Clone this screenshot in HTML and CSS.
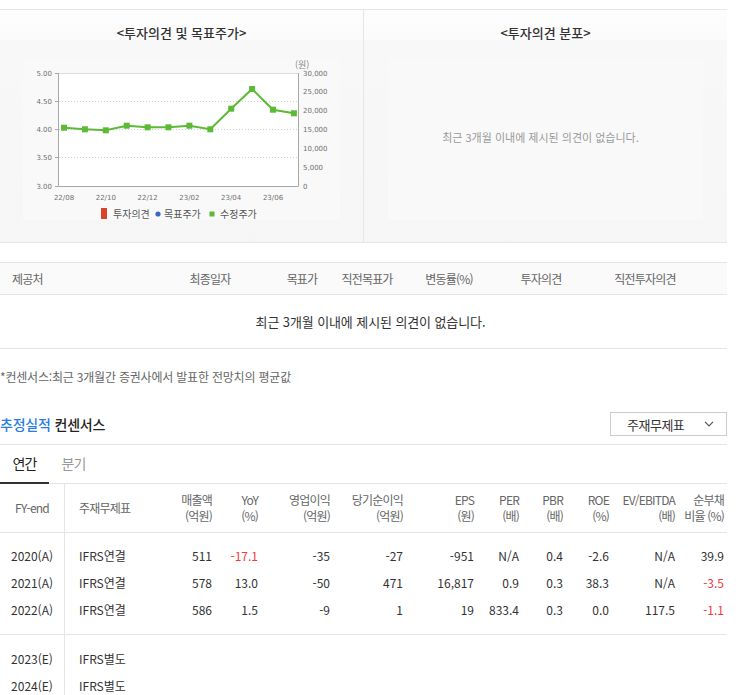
FILE: index.html
```html
<!DOCTYPE html>
<html lang="ko">
<head>
<meta charset="utf-8">
<title>컨센서스</title>
<link rel="stylesheet" href="styles.css">
</head>
<body>
<div class="page">
  <section class="opinion">
    <div class="panel panel-left">
      <h3 class="panel-title">&lt;투자의견 및 목표주가&gt;</h3>
      <svg class="chart" width="320" height="170" viewBox="-2 0 320 170">
        <rect x="-2" y="3" width="317" height="162" fill="#f9f9f9"/>
        <rect x="33" y="18" width="241" height="113" fill="#ffffff"/>
        <g stroke="#cfcfcf" stroke-width="1" stroke-dasharray="1 2">
          <line x1="34" y1="46.5" x2="273" y2="46.5"/>
          <line x1="34" y1="74.5" x2="273" y2="74.5"/>
          <line x1="34" y1="102.5" x2="273" y2="102.5"/>
        </g>
        <line x1="33" y1="18.5" x2="274" y2="18.5" stroke="#dddddd"/>
        <path d="M33.5 18 V131.5 H273.5 V18" fill="none" stroke="#a8a8a8"/>
        <g stroke="#a8a8a8">
          <line x1="30" y1="18.5" x2="33" y2="18.5"/>
          <line x1="30" y1="46.5" x2="33" y2="46.5"/>
          <line x1="30" y1="74.5" x2="33" y2="74.5"/>
          <line x1="30" y1="102.5" x2="33" y2="102.5"/>
          <line x1="30" y1="131.5" x2="33" y2="131.5"/>
        </g>
        <g class="ax" text-anchor="end">
          <text x="27" y="20.5">5.00</text>
          <text x="27" y="49">4.50</text>
          <text x="27" y="77">4.00</text>
          <text x="27" y="105">3.50</text>
          <text x="27" y="133.5">3.00</text>
        </g>
        <g class="ax">
          <text x="278" y="20.5">30,000</text>
          <text x="278" y="39.3">25,000</text>
          <text x="278" y="58.2">20,000</text>
          <text x="278" y="77">15,000</text>
          <text x="278" y="95.8">10,000</text>
          <text x="278" y="114.7">5,000</text>
          <text x="278" y="133.5">0</text>
        </g>
        <text class="unit" x="270" y="13">(원)</text>
        <g class="ax" text-anchor="middle">
          <text x="39" y="144.5">22/08</text>
          <text x="80.8" y="144.5">22/10</text>
          <text x="122.6" y="144.5">22/12</text>
          <text x="164.4" y="144.5">23/02</text>
          <text x="206.2" y="144.5">23/04</text>
          <text x="248" y="144.5">23/06</text>
        </g>
        <polyline fill="none" stroke="#5cba35" stroke-width="2" points="39,72.7 59.9,74.3 80.8,75.3 101.7,70.7 122.6,72.3 143.5,72.3 164.4,70.7 185.3,74.3 206.2,53.7 227.1,34 248,54.7 268.9,58.3"/>
        <g fill="#5cba35">
          <rect x="36" y="69.7" width="6" height="6"/>
          <rect x="56.9" y="71.3" width="6" height="6"/>
          <rect x="77.8" y="72.3" width="6" height="6"/>
          <rect x="98.7" y="67.7" width="6" height="6"/>
          <rect x="119.6" y="69.3" width="6" height="6"/>
          <rect x="140.5" y="69.3" width="6" height="6"/>
          <rect x="161.4" y="67.7" width="6" height="6"/>
          <rect x="182.3" y="71.3" width="6" height="6"/>
          <rect x="203.2" y="50.7" width="6" height="6"/>
          <rect x="224.1" y="31" width="6" height="6"/>
          <rect x="245" y="51.7" width="6" height="6"/>
          <rect x="265.9" y="55.3" width="6" height="6"/>
        </g>
        <rect x="76" y="153" width="6" height="11" fill="#d9412b"/>
        <circle cx="133" cy="159" r="2.6" fill="#3a68c0"/>
        <rect x="184.5" y="156.5" width="5" height="5" fill="#5cba35"/>
        <g class="legend">
          <text x="88" y="163">투자의견</text>
          <text x="139" y="163">목표주가</text>
          <text x="195" y="163">수정주가</text>
        </g>
      </svg>
    </div>
    <div class="panel panel-right">
      <h3 class="panel-title">&lt;투자의견 분포&gt;</h3>
      <div class="empty-box">최근 3개월 이내에 제시된 의견이 없습니다.</div>
    </div>
  </section>

  <section class="report">
    <div class="report-head">
      <span>제공처</span>
      <span>최종일자</span>
      <span>목표가</span>
      <span>직전목표가</span>
      <span>변동률(%)</span>
      <span>투자의견</span>
      <span>직전투자의견</span>
    </div>
    <div class="report-empty">최근 3개월 이내에 제시된 의견이 없습니다.</div>
  </section>

  <p class="note">*컨센서스:최근 3개월간 증권사에서 발표한 전망치의 평균값</p>

  <div class="cons-head">
    <h2 class="cons-title"><span class="blue">추정실적</span> 컨센서스</h2>
    <div class="select">
      <span>주재무제표</span>
      <svg class="chev" width="10" height="6" viewBox="0 0 10 6"><path d="M1 0.8 L5 4.8 L9 0.8" fill="none" stroke="#555" stroke-width="1.2"/></svg>
    </div>
  </div>

  <div class="tabs">
    <span class="tab active">연간</span>
    <span class="tab">분기</span>
  </div>

  <table class="fin">
    <colgroup>
      <col style="width:65px"><col style="width:85px"><col style="width:62px"><col style="width:46px">
      <col style="width:72px"><col style="width:73px"><col style="width:71px"><col style="width:45px">
      <col style="width:44px"><col style="width:46px"><col style="width:66px"><col style="width:52px">
    </colgroup>
    <thead>
      <tr>
        <th class="fy">FY-end</th>
        <th class="std">주재무제표</th>
        <th>매출액<br>(억원)</th>
        <th>YoY<br>(%)</th>
        <th>영업이익<br>(억원)</th>
        <th>당기순이익<br>(억원)</th>
        <th>EPS<br>(원)</th>
        <th>PER<br>(배)</th>
        <th>PBR<br>(배)</th>
        <th>ROE<br>(%)</th>
        <th>EV/EBITDA<br>(배)</th>
        <th class="last">순부채<br>비율 (%)</th>
      </tr>
    </thead>
    <tbody class="grp">
      <tr>
        <td class="fy">2020(A)</td><td class="std">IFRS연결</td><td>511</td><td class="neg">-17.1</td><td>-35</td><td>-27</td><td>-951</td><td>N/A</td><td>0.4</td><td>-2.6</td><td>N/A</td><td class="last">39.9</td>
      </tr>
      <tr>
        <td class="fy">2021(A)</td><td class="std">IFRS연결</td><td>578</td><td>13.0</td><td>-50</td><td>471</td><td>16,817</td><td>0.9</td><td>0.3</td><td>38.3</td><td>N/A</td><td class="last neg">-3.5</td>
      </tr>
      <tr>
        <td class="fy">2022(A)</td><td class="std">IFRS연결</td><td>586</td><td>1.5</td><td>-9</td><td>1</td><td>19</td><td>833.4</td><td>0.3</td><td>0.0</td><td>117.5</td><td class="last neg">-1.1</td>
      </tr>
    </tbody>
    <tbody class="grp">
      <tr>
        <td class="fy">2023(E)</td><td class="std">IFRS별도</td><td></td><td></td><td></td><td></td><td></td><td></td><td></td><td></td><td></td><td class="last"></td>
      </tr>
      <tr>
        <td class="fy">2024(E)</td><td class="std">IFRS별도</td><td></td><td></td><td></td><td></td><td></td><td></td><td></td><td></td><td></td><td class="last"></td>
      </tr>
    </tbody>
  </table>
</div>
</body>
</html>
```

FILE: styles.css
```css
* {
  box-sizing: border-box;
}

body {
  margin: 0;
  background: #ffffff;
  font-family: "Noto Sans CJK KR", "Noto Sans", sans-serif;
  font-size: 12px;
  color: #333333;
}

.page {
  width: 727px;
}

/* ---------- opinion panels ---------- */
.opinion {
  margin-top: 9px;
  display: grid;
  grid-template-columns: 364px 363px;
  height: 234px;
  border-top: 1px solid #e6e6e6;
  border-bottom: 1px solid #e6e6e6;
}

.panel {
  background: linear-gradient(to bottom, #fdfdfd 0, #fbfbfb 30px, #f8f8f8 31px, #f6f6f6 100%);
}

.panel-left {
  border-right: 1px solid #e6e6e6;
}

.panel-title {
  margin: 0;
  padding-top: 13px;
  line-height: 20px;
  font-size: 13px;
  font-weight: 500;
  text-align: center;
  color: #333333;
}

.chart {
  display: block;
  margin: 12px 0 0 23px;
}

.ax {
  font-family: "DejaVu Sans", sans-serif;
  font-size: 7px;
  fill: #707070;
}

.unit {
  font-family: "Noto Sans CJK KR", sans-serif;
  font-size: 9px;
  fill: #888888;
}

.legend {
  font-family: "Noto Sans CJK KR", sans-serif;
  font-size: 10px;
  fill: #555555;
}

.empty-box {
  margin: 15px 0 0 24px;
  width: 315px;
  height: 162px;
  padding: 0 10px 4px 0;
  background: #f9f9f9;
  display: flex;
  align-items: center;
  justify-content: center;
  font-size: 11px;
  color: #999999;
}

/* ---------- report table ---------- */
.report {
  margin-top: 19px;
}

.report-head {
  display: grid;
  grid-template-columns: 160px 100px 84px 46px 118px 66px 142px;
  align-items: center;
  height: 33px;
  border-top: 1px solid #e5e5e5;
  border-bottom: 1px solid #e5e5e5;
  background: #fafafa;
  color: #666666;
  letter-spacing: -0.8px;
}

.report-head span {
  display: flex;
  justify-content: center;
  white-space: nowrap;
}

.report-head span:first-child {
  justify-content: flex-start;
  padding-left: 12px;
}

.report-empty {
  height: 54px;
  padding-left: 14px;
  border-bottom: 1px solid #e5e5e5;
  display: flex;
  align-items: center;
  justify-content: center;
  font-size: 13px;
  letter-spacing: -0.1px;
  color: #333333;
}

.note {
  margin: 19px 0 0;
  line-height: 18px;
  color: #666666;
  letter-spacing: -0.2px;
}

/* ---------- consensus ---------- */
.cons-head {
  margin-top: 26px;
  display: flex;
  justify-content: space-between;
  align-items: center;
  padding-bottom: 8px;
  border-bottom: 1px solid #e5e5e5;
}

.cons-title {
  margin: 0;
  font-size: 14px;
  font-weight: 500;
  letter-spacing: -0.2px;
  line-height: 24px;
  color: #222222;
}

.blue {
  color: #2a7de1;
}

.select {
  width: 117px;
  height: 24px;
  border: 1px solid #cccccc;
  display: flex;
  align-items: center;
  justify-content: space-between;
  padding: 0 12px 0 16px;
  font-size: 13px;
  letter-spacing: -0.5px;
  color: #333333;
}

.chev {
  display: block;
}

.tabs {
  display: flex;
  border-bottom: 1px solid #e5e5e5;
}

.tab {
  width: 49px;
  height: 39px;
  line-height: 37px;
  text-align: center;
  font-size: 14px;
  letter-spacing: -1px;
  color: #999999;
  border-bottom: 2px solid transparent;
  margin-bottom: -1px;
}

.tab.active {
  color: #222222;
  border-bottom-color: #333333;
}

/* ---------- financial table ---------- */
.fin {
  width: 727px;
  border-collapse: separate;
  border-spacing: 0;
  table-layout: fixed;
  font-size: 12px;
}

.fin th {
  padding: 8px 0;
  line-height: 16px;
  font-weight: normal;
  color: #666666;
  letter-spacing: -0.8px;
  text-align: right;
  vertical-align: middle;
  white-space: nowrap;
  border-bottom: 1px solid #e5e5e5;
}

.fin td {
  padding: 0;
  line-height: 27px;
  text-align: right;
  white-space: nowrap;
  color: #333333;
}

.fin .fy {
  text-align: center;
  border-right: 1px solid #e5e5e5;
}

.fin .std {
  text-align: left;
  padding-left: 14px;
}

.fin .last {
  padding-right: 3px;
}

.grp tr:first-child td {
  padding-top: 9px;
}

.grp tr:last-child td {
  padding-bottom: 11px;
}

.grp:first-of-type tr:last-child td {
  border-bottom: 1px solid #e5e5e5;
}

.grp + .grp tr:first-child td {
  padding-top: 10px;
}

.neg {
  color: #ee3b3b !important;
}
```
